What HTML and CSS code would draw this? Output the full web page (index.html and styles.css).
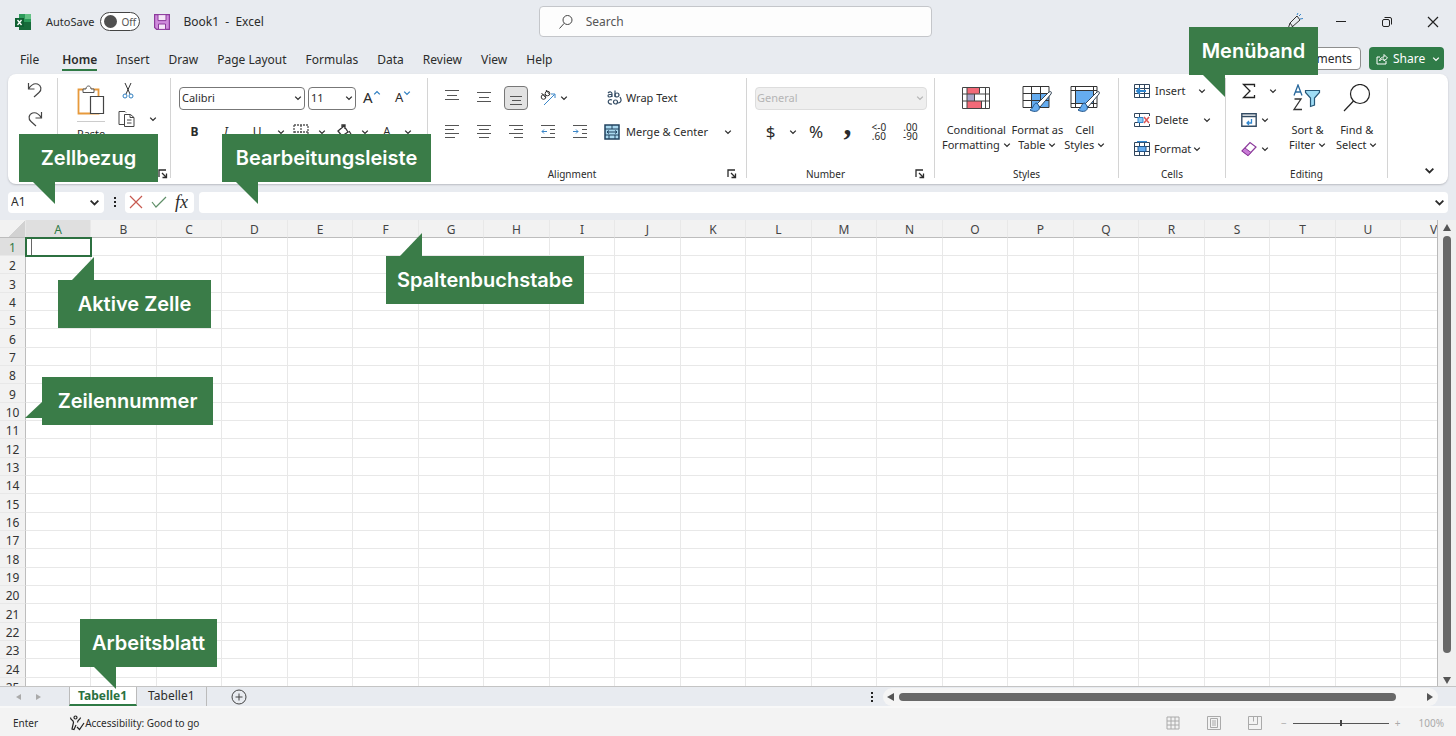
FILE: index.html
```html
<!DOCTYPE html>
<html lang="de">
<head>
    <meta charset="UTF-8">
    <meta name="viewport" content="width=device-width, initial-scale=1.0">
    <title>Book1 - Excel</title>
    <link rel="stylesheet" href="styles.css">
</head>
<body>
    <!-- Shared icons -->
    <svg class="sprite" aria-hidden="true">
        <symbol id="chevron" viewBox="0 0 8 8"><path d="M1.2 2.6 4 5.4 6.8 2.6" fill="none" stroke="currentColor" stroke-width="1.3"/></symbol>
        <symbol id="launcher" viewBox="0 0 10 10"><path d="M1 8V1h7M4 4l4 4M8.5 4.5v4h-4" fill="none" stroke="currentColor" stroke-width="1.3"/></symbol>
        <symbol id="cells" viewBox="0 0 16 16"><path fill="#fff" stroke="#30455c" d="M.5 1.500h15v13H.5zM.5 5.500h15M.5 10.500h15M5.500 1.500v13M10.500 1.500v13"/></symbol>
    </svg>

    <header class="titlebar">
        <div class="title-left">
            <svg class="logo" width="16" height="16" viewBox="0 0 16 16"><path fill="#2d9b5b" d="M4 0h12v16H4z"/><path fill="#176b3a" d="M4 8h12v8H4z"/><path fill="#64c285" d="M10 0h6v5h-6z"/><path fill="#0f6032" d="M0 4h9v9H0z"/><path d="m2.500 6 4 5M6.500 6l-4 5" stroke="#fff" stroke-width="1.300"/></svg>
            <label class="autosave">AutoSave
                <span class="toggle"><input type="checkbox"><span>Off</span></span>
            </label>
            <button class="icon-btn save" aria-label="Save"><svg width="16" height="16" viewBox="0 0 16 16"><path fill="#cf8bdc" stroke="#8c3a9c" stroke-width="1.200" d="M.6.6h14.800v14.800H2.600l-2-2z"/><path fill="#f5e6f8" stroke="#8c3a9c" d="M4 .6h8v6H4zM4.500 10h7v5.400h-7z"/></svg></button>
            <span class="doc-name">Book1&nbsp; -&nbsp; Excel</span>
        </div>
        <label class="search">
            <svg width="16" height="16" viewBox="0 0 16 16"><circle cx="9.500" cy="6" r="4.500" fill="none" stroke="#444"/><path d="M6.200 9.300 1.500 14.500" stroke="#444"/></svg>
            <input type="text" placeholder="Search" aria-label="Search">
        </label>
        <div class="window-buttons">
            <button class="icon-btn" aria-label="Coming soon"><svg width="18" height="18" viewBox="0 0 18 18"><path d="m2 16 2-6 7-7 3 4-8 7-4 2zM4 10l3 4" fill="none" stroke="#333"/><path d="m11 2 1-2M13 3l2-2M14 6l3-.5" stroke="#3a86c8"/></svg></button>
            <button class="icon-btn" aria-label="Minimize"><svg width="12" height="12" viewBox="0 0 12 12"><path d="M1 5.500h10" stroke="#222"/></svg></button>
            <button class="icon-btn" aria-label="Restore"><svg width="12" height="12" viewBox="0 0 12 12"><rect x="1.500" y="3.500" width="7" height="7" rx="1.500" fill="none" stroke="#222"/><path d="M3.500 1.500H9a1.500 1.500 0 0 1 1.500 1.500v5.500" fill="none" stroke="#222"/></svg></button>
            <button class="icon-btn" aria-label="Close"><svg width="12" height="12" viewBox="0 0 12 12"><path d="m1 1 10 10M11 1 1 11" stroke="#222" stroke-width="1.200"/></svg></button>
        </div>
    </header>

    <nav class="tabs">
        <a href="#" class="file">File</a>
        <a href="#" class="active">Home</a>
        <a href="#">Insert</a>
        <a href="#">Draw</a>
        <a href="#">Page Layout</a>
        <a href="#">Formulas</a>
        <a href="#">Data</a>
        <a href="#">Review</a>
        <a href="#">View</a>
        <a href="#">Help</a>
        <button class="comments">Comments</button>
        <button class="share"><svg width="12" height="12" viewBox="0 0 12 12"><path d="M4 4H1v7h9V8M3.500 8C4 5 6 4 8 4V1.500L11.500 5 8 8V6C6 6 4.500 6.500 3.500 8z" fill="none" stroke="#fff"/></svg>Share<svg class="chev"><use href="#chevron"/></svg></button>
    </nav>

    <section class="ribbon">
        <div class="group undo">
            <button class="icon-btn" aria-label="Undo"><svg width="18" height="18" viewBox="0 0 18 18"><path d="M2.500 2v6h6M2.500 8C5 4 8 2 11.500 3c4 1.500 4.500 6 1.500 8.500L8 16" fill="none" stroke="#444" stroke-width="1.200"/></svg></button>
            <button class="icon-btn" aria-label="Redo"><svg width="18" height="18" viewBox="0 0 18 18"><path d="M15.500 2v6h-6M15.500 8C13 4 10 2 6.500 3 2.500 4.500 2 9 5 11.500L10 16" fill="none" stroke="#444" stroke-width="1.200"/></svg></button>
        </div>

        <div class="group clipboard">
            <div class="group-body">
                <button class="big paste"><svg width="28" height="30" viewBox="0 0 28 30"><path d="M1.500 4.500h20v24h-20z" fill="#fff" stroke="#e79a3c" stroke-width="1.800"/><path d="M6 7.500V4h3c0-4 5-4 5 0h3v3.500z" fill="#fff" stroke="#555"/><path d="M13.500 11.500h13v17h-13z" fill="#fff" stroke="#444" stroke-width="1.200"/></svg><span class="paste-text">Paste</span></button>
                <div class="stack">
                    <button class="icon-btn" aria-label="Cut"><svg width="12" height="16" viewBox="0 0 12 16"><path d="m3 0 5 11M9 0 4 11" stroke="#333"/><circle cx="3" cy="13" r="2" fill="none" stroke="#2f7fc1"/><circle cx="9" cy="13" r="2" fill="none" stroke="#2f7fc1"/></svg></button>
                    <button class="icon-btn copy" aria-label="Copy"><svg width="17" height="16" viewBox="0 0 17 16"><path d="M6 13.500H1V.5h6l1 1" fill="none" stroke="#444"/><path d="M6.500 3.500h6l3.500 3v9H6.500zM12 3.500v3h4M9 9h4.500M9 12h4.500" fill="none" stroke="#444"/></svg><svg class="chev"><use href="#chevron"/></svg></button>
                </div>
            </div>
            <div class="group-label"><svg class="launch"><use href="#launcher"/></svg></div>
        </div>

        <div class="group font">
            <div class="group-body rows">
                <div class="row">
                    <span class="select font-name"><select aria-label="Font"><option>Calibri</option></select><svg class="chev"><use href="#chevron"/></svg></span>
                    <span class="select font-size"><select aria-label="Font size"><option>11</option></select><svg class="chev"><use href="#chevron"/></svg></span>
                    <button class="tool grow" aria-label="Increase font size">A<svg class="chev up blue"><use href="#chevron"/></svg></button>
                    <button class="tool shrink" aria-label="Decrease font size">A<svg class="chev blue"><use href="#chevron"/></svg></button>
                </div>
                <div class="row">
                    <button class="tool"><b>B</b></button>
                    <button class="tool"><i>I</i></button>
                    <button class="tool"><u>U</u></button>
                    <button class="arrow" aria-label="Underline styles"><svg class="chev"><use href="#chevron"/></svg></button>
                    <button class="narrow" aria-label="Borders"><svg width="16" height="16" viewBox="0 0 16 16"><path d="M1 1h14v14M1 1v14M8 1v14M1 8h14" fill="none" stroke="#555" stroke-width="1.300" stroke-dasharray="2 1"/><path d="M1 15h14" stroke="#222" stroke-width="1.500"/></svg></button>
                    <button class="arrow" aria-label="More borders"><svg class="chev"><use href="#chevron"/></svg></button>
                    <button class="narrow" aria-label="Fill color"><svg width="16" height="16" viewBox="0 0 16 16"><path d="m2 7 6-5 4 6-6 4zM6 4V1h3v4M13 7l2 3" fill="none" stroke="#333" stroke-width="1.300"/><path d="M1 14.500h14" stroke="#f4d038" stroke-width="3"/></svg></button>
                    <button class="arrow" aria-label="More fill colors"><svg class="chev"><use href="#chevron"/></svg></button>
                    <button class="narrow">A</button>
                    <button class="arrow" aria-label="More font colors"><svg class="chev"><use href="#chevron"/></svg></button>
                </div>
            </div>
        </div>

        <div class="group alignment">
            <div class="group-body rows">
                <div class="row">
                    <button class="tool" aria-label="Top align"><svg width="16" height="16" viewBox="0 0 16 16"><path d="M1 .5h14M3 5.500h10M1 9.500h14" stroke="#555"/></svg></button>
                    <button class="tool" aria-label="Middle align"><svg width="16" height="16" viewBox="0 0 16 16"><path d="M1 2.500h14M3 7.500h10M1 11.500h14" stroke="#555"/></svg></button>
                    <button class="tool" aria-label="Bottom align"><span class="pressed"><svg width="16" height="16" viewBox="0 0 16 16"><path d="M2 6.500h12M4 10.500h9M2 14.500h12" stroke="#555"/></svg></span></button>
                    <button class="tool" aria-label="Orientation"><svg width="18" height="18" viewBox="0 0 18 18"><g fill="none" stroke="#333"><circle cx="4.500" cy="8" r="2.300"/><path d="m2.500 4 4.500 5"/><circle cx="8.500" cy="4.500" r="2.300"/><path d="m7 1 4 5"/></g><path d="M5 16 15.500 5.500M12 5h4v4" fill="none" stroke="#3a86c8"/></svg></button>
                    <button class="arrow orient" aria-label="Orientation options"><svg class="chev"><use href="#chevron"/></svg></button>
                    <button class="text-btn wrap"><svg width="16" height="16" viewBox="0 0 16 16"><g fill="none" stroke="#334b63" stroke-width="1.200"><path d="M2 3c2-2 4-1 4 1v3M6 4.500H3.500c-2 0-2 2.500 0 2.500S6 6 6 5M9 .5V7"/><circle cx="11" cy="5" r="2"/><path d="M6 10c-5-2-5 5 0 4"/><circle cx="9.500" cy="12" r="2"/><path d="M14 7c2 3 1 6-2 6"/></g></svg>Wrap Text</button>
                </div>
                <div class="row">
                    <button class="tool" aria-label="Align left"><svg width="16" height="16" viewBox="0 0 16 16"><path d="M1 1.500h14M1 5.500h9M1 9.500h14M1 13.500h10" stroke="#555"/></svg></button>
                    <button class="tool" aria-label="Center"><svg width="16" height="16" viewBox="0 0 16 16"><path d="M1 1.500h14M3 5.500h10M1 9.500h14M3 13.500h10" stroke="#555"/></svg></button>
                    <button class="tool" aria-label="Align right"><svg width="16" height="16" viewBox="0 0 16 16"><path d="M1 1.500h14M6 5.500h9M1 9.500h14M6 13.500h9" stroke="#555"/></svg></button>
                    <button class="tool" aria-label="Decrease indent"><svg width="16" height="16" viewBox="0 0 16 16"><path d="M1 1.500h14M10 5.500h5M10 9.500h5M1 13.500h14" stroke="#555"/><path d="M7 7.500H2M4 5.500l-2 2 2 2" fill="none" stroke="#3a86c8"/></svg></button>
                    <button class="tool" aria-label="Increase indent"><svg width="16" height="16" viewBox="0 0 16 16"><path d="M1 1.500h14M10 5.500h5M10 9.500h5M1 13.500h14" stroke="#555"/><path d="M1 7.500h5M4 5.500l2 2-2 2" fill="none" stroke="#3a86c8"/></svg></button>
                    <button class="text-btn merge"><svg width="16" height="16" viewBox="0 0 16 16"><path d="M1 1h14v14H1z" fill="#a9d8ef" stroke="#20425f" stroke-width="1.500"/><path d="M1 5h14M1 11h14M8 1v4M5 11v4M11 11v4M3 8h10M5 6.500 3 8l2 1.500M11 6.500 13 8l-2 1.500" fill="none" stroke="#20425f"/></svg>Merge &amp; Center<svg class="chev"><use href="#chevron"/></svg></button>
                </div>
            </div>
            <div class="group-label with-launcher">Alignment<svg class="launch"><use href="#launcher"/></svg></div>
        </div>

        <div class="group number">
            <div class="group-body rows">
                <div class="row">
                    <span class="select number-format"><select aria-label="Number format" disabled><option>General</option></select><svg class="chev"><use href="#chevron"/></svg></span>
                </div>
                <div class="row">
                    <button class="tool symbol">$</button>
                    <button class="arrow" aria-label="Currency"><svg class="chev"><use href="#chevron"/></svg></button>
                    <button class="tool symbol">%</button>
                    <button class="tool comma">,</button>
                    <button class="tool decimals">&lt;-0<br>.60</button>
                    <button class="tool decimals">.00<br>-90</button>
                </div>
            </div>
            <div class="group-label with-launcher">Number<svg class="launch"><use href="#launcher"/></svg></div>
        </div>

        <div class="group styles">
            <div class="group-body">
                <button class="big"><svg width="28" height="26" viewBox="0 0 28 26"><path d="M.5 2.500h27v21H.5z" fill="#fff"/><path d="M5 3h12v6H5zM5 16h14v7H5z" fill="#f26a78"/><path d="M5 9h7v7H5z" fill="#a9a5c9"/><path d="M.5 2.500h27v21H.5zM5 2.500v21M17.500 2.500v6M12.500 9v7M19.500 16v7M23.500 2.500v21M.5 9h27M.5 16h27" fill="none" stroke="#444"/></svg>Conditional<span>Formatting <svg class="chev"><use href="#chevron"/></svg></span></button>
                <button class="big"><svg width="30" height="28" viewBox="0 0 30 28"><path d="M1 2.500h26v21H1z" fill="#fff"/><path d="M10 9h17v14H10z" fill="#65acef"/><path d="M1 2.500h26v21H1zM9.500 2.500v21M18.500 2.500v21M1 9.500h26M1 16.500h26" fill="none" stroke="#333"/><path d="m29 10-11 13-3-3L27 8c2-1 3 0 2 2z" fill="#fff" stroke="#345"/><path d="M15 19c-4 0-3 5-7 7 5 3 11 1 9-4z" fill="#65acef" stroke="#22558a"/></svg>Format as<span>Table <svg class="chev"><use href="#chevron"/></svg></span></button>
                <button class="big"><svg width="30" height="28" viewBox="0 0 30 28"><path d="M1 2.500h26v21H1z" fill="#fff"/><path d="M5 7h18v12H5z" fill="#65acef"/><path d="M1 2.500h26v21H1zM5.500 2.500v21M23.500 2.500v21M1 6.500h26M1 19.500h26" fill="none" stroke="#333"/><path d="m29 10-11 13-3-3L27 8c2-1 3 0 2 2z" fill="#fff" stroke="#345"/><path d="M15 19c-4 0-3 5-7 7 5 3 11 1 9-4z" fill="#65acef" stroke="#22558a"/></svg>Cell<span>Styles <svg class="chev"><use href="#chevron"/></svg></span></button>
            </div>
            <div class="group-label">Styles</div>
        </div>

        <div class="group cells">
            <div class="group-body list">
                <button class="text-btn insert"><svg width="16" height="16"><use href="#cells"/><path d="M3 8h9M6 5 3 8l3 3" fill="none" stroke="#2f86d0" stroke-width="2"/></svg>Insert<svg class="chev"><use href="#chevron"/></svg></button>
                <button class="text-btn delete"><svg width="16" height="16" viewBox="0 0 16 16"><path d="M.5 5V1.500h15V4M.5 11v3.500h15V12M.5 5.500h5M.5 10.500h5M5.500 1.500v4M5.500 10.500v4" fill="none" stroke="#30455c"/><path d="M4 5.500h5v5H4z" fill="#8cc8f2" stroke="#2f86d0"/><path d="m10 5 5 6M15 5l-5 6" stroke="#dc5555" stroke-width="1.500"/></svg>Delete<svg class="chev"><use href="#chevron"/></svg></button>
                <button class="text-btn format"><svg width="16" height="16"><use href="#cells"/><path d="M4 5.500h8v5H4z" fill="#65acef" stroke="#22558a"/><path d="M3 .5h10" stroke="#2f86d0" stroke-width="1.500"/></svg>Format<svg class="chev"><use href="#chevron"/></svg></button>
            </div>
            <div class="group-label">Cells</div>
        </div>

        <div class="group editing">
            <div class="group-body">
                <div class="list">
                    <button class="text-btn sum" aria-label="AutoSum"><svg width="16" height="16" viewBox="0 0 16 16"><path d="M13.500 4V1.500h-11L9 8l-6.500 6.500h11V12" fill="none" stroke="#222" stroke-width="1.300"/></svg><svg class="chev"><use href="#chevron"/></svg></button>
                    <button class="text-btn" aria-label="Fill"><svg width="16" height="16" viewBox="0 0 16 16"><path d="M.8 1.800h14.400v12.400H.8zM.8 4.500h14.400" fill="#fff" stroke="#334b63" stroke-width="1.400"/><path d="M10.500 7v4H6M8 9l-2 2 2 2" fill="none" stroke="#2f86d0" stroke-width="1.300"/></svg><svg class="chev"><use href="#chevron"/></svg></button>
                    <button class="text-btn" aria-label="Clear"><svg width="16" height="16" viewBox="0 0 16 16"><path d="m1 10 8-8.500L15 6l-8 8.500z" fill="#fff" stroke="#8c3a9c" stroke-width="1.200"/><path d="m1 10 3-3 6 4.500-3 3z" fill="#c97bd6" stroke="#8c3a9c"/></svg><svg class="chev"><use href="#chevron"/></svg></button>
                </div>
                <button class="big"><svg width="30" height="28" viewBox="0 0 30 28"><path d="M2 11.500 6 1l4 10.500M3.500 8h5" fill="none" stroke="#28689c" stroke-width="1.300"/><path d="M2.500 15H9L2 25.500h8" fill="none" stroke="#333" stroke-width="1.300"/><path d="M13.500 6.500h14v2L22.500 14v7l-4 1.500V14l-5-5.500z" fill="#9edcf5" stroke="#285878" stroke-width="1.200"/></svg>Sort &amp;<span>Filter <svg class="chev"><use href="#chevron"/></svg></span></button>
                <button class="big"><svg width="30" height="28" viewBox="0 0 30 28"><circle cx="18" cy="10" r="9.500" fill="none" stroke="#222" stroke-width="1.200"/><path d="M11.500 17 2 27" stroke="#222" stroke-width="1.200"/></svg>Find &amp;<span>Select <svg class="chev"><use href="#chevron"/></svg></span></button>
            </div>
            <div class="group-label">Editing</div>
        </div>
        <button class="icon-btn collapse" aria-label="Collapse ribbon"><svg width="11" height="11"><use href="#chevron"/></svg></button>
    </section>

    <div class="formula-bar">
        <label class="name-box"><input type="text" value="A1" aria-label="Name box"><svg width="11" height="11"><use href="#chevron"/></svg></label>
        <span class="dots"></span>
        <div class="fx-box">
            <button class="icon-btn" aria-label="Cancel"><svg width="14" height="14" viewBox="0 0 14 14"><path d="m1 1 12 12M13 1 1 13" stroke="#c75a50" stroke-width="1.200"/></svg></button>
            <button class="icon-btn" aria-label="Enter"><svg width="16" height="14" viewBox="0 0 16 14"><path d="m1 7 4 5L15 2" fill="none" stroke="#5f8f68" stroke-width="1.200"/></svg></button>
            <button class="icon-btn fx">fx</button>
        </div>
        <label class="formula"><input type="text" aria-label="Formula"><svg width="11" height="11"><use href="#chevron"/></svg></label>
    </div>

    <main class="sheet">
        <div class="grid-view">
            <table id="grid"></table>
        </div>
        <div class="v-scroll">
            <svg width="8" height="8"><path d="M4 0 8 7H0z" fill="#555"/></svg>
            <div class="thumb"></div>
            <svg width="8" height="8"><path d="M0 1h8L4 8z" fill="#555"/></svg>
        </div>
    </main>

    <div class="sheet-tabs">
        <button class="icon-btn" aria-label="Previous sheet"><svg width="5" height="8"><path d="M5 1v6L0 4z" fill="#aaa"/></svg></button>
        <button class="icon-btn" aria-label="Next sheet"><svg width="5" height="8"><path d="M0 1v6l5-3z" fill="#aaa"/></svg></button>
        <a href="#" class="sheet-tab active">Tabelle1</a>
        <a href="#" class="sheet-tab">Tabelle1</a>
        <button class="icon-btn add" aria-label="New sheet"><svg width="16" height="16" viewBox="0 0 16 16"><circle cx="8" cy="8" r="7" fill="none" stroke="#444"/><path d="M8 4.500v7M4.500 8h7" stroke="#444"/></svg></button>
        <span class="dots"></span>
        <div class="h-scroll">
            <svg width="8" height="8"><path d="M7 0v8L0 4z" fill="#555"/></svg>
            <div class="thumb"></div>
            <svg width="8" height="8"><path d="M1 0v8l6-4z" fill="#555"/></svg>
        </div>
    </div>

    <footer class="status">
        <span>Enter</span>
        <span class="access"><svg width="16" height="16" viewBox="0 0 16 16"><g fill="none" stroke="#222" stroke-width="1.200"><circle cx="6.500" cy="2.500" r="1.500"/><path d="M1.500 2.500c0 3 3 2 3 5L3 14l2 .5L7 10M11.500 2.500c0 2-3 2-3 5"/><path d="m8 12 2.500 2.500L15 8"/></g></svg>Accessibility: Good to go</span>
        <div class="views">
            <button class="icon-btn" aria-label="Normal view"><svg width="14" height="14" viewBox="0 0 14 14"><path d="M1 1h12v12H1zM5 1v12M9 1v12M1 5h12M1 9h12" fill="none" stroke="#aaa"/></svg></button>
            <button class="icon-btn" aria-label="Page layout view"><svg width="14" height="14" viewBox="0 0 14 14"><path d="M.5.5h13v13H.5zM3.500 2.500h7v9h-7zM5 5h4M5 7h4M5 9h4" fill="none" stroke="#aaa"/></svg></button>
            <button class="icon-btn" aria-label="Page break view"><svg width="14" height="14" viewBox="0 0 14 14"><path d="M.5.5h13v13H.5zM.5 8.500h9v-8M5.500.5v5" fill="none" stroke="#aaa"/></svg></button>
        </div>
        <div class="zoom">
            <span>−</span>
            <input type="range" aria-label="Zoom" value="50">
            <span>+</span>
        </div>
        <span class="percent">100%</span>
    </footer>

    <!-- Callouts -->
    <div class="callout menuband">Menüband</div>
    <div class="callout zellbezug">Zellbezug</div>
    <div class="callout bearbeitungsleiste">Bearbeitungsleiste</div>
    <div class="callout spaltenbuchstabe">Spaltenbuchstabe</div>
    <div class="callout aktive-zelle">Aktive Zelle</div>
    <div class="callout zeilennummer">Zeilennummer</div>
    <div class="callout arbeitsblatt">Arbeitsblatt</div>

    <script src="script.js"></script>
</body>
</html>
```
FILE: styles.css
```css
* {
    box-sizing: border-box;
}
body {
    margin: 0;
    height: 100vh;
    display: flex;
    flex-direction: column;
    overflow: hidden;
    position: relative;
    background: #e8ebf0;
    color: #2b2b2b;
    font-family: "Noto Sans", "Open Sans", sans-serif;
    font-size: 12px;
    line-height: 16px;
}
button, input, select {
    font: inherit;
    color: inherit;
    border: 0;
    padding: 0;
    margin: 0;
    background: none;
    outline: none;
}
a {
    color: inherit;
    text-decoration: none;
}
svg {
    flex: none;
}
.sprite {
    position: absolute;
    width: 0;
    height: 0;
}
.chev {
    width: 8px;
    height: 8px;
}
.icon-btn, .tool, .arrow, .narrow {
    display: flex;
    align-items: center;
    justify-content: center;
}

/* Title bar */
.titlebar {
    display: flex;
    align-items: center;
    height: 43px;
}
.title-left {
    flex: 0 0 37%;
    display: flex;
    align-items: center;
    padding-left: 15px;
}
.autosave {
    display: flex;
    align-items: center;
    gap: 6px;
    margin-left: 15px;
    font-size: 11px;
}
.toggle {
    display: flex;
    align-items: center;
    gap: 4px;
    width: 40px;
    height: 19px;
    padding-left: 3px;
    border: 1px solid #444;
    border-radius: 10px;
    background: #fff;
    font-size: 10px;
    color: #555;
}
.toggle input {
    appearance: none;
    width: 13px;
    height: 13px;
    border-radius: 50%;
    background: #505050;
}
.save {
    margin: 0 13px 0 14px;
}
.search {
    flex: 0 0 27%;
    height: 31px;
    display: flex;
    align-items: center;
    gap: 12px;
    padding-left: 18px;
    border: 1px solid #c4c6ca;
    border-radius: 4px;
    background: #fdfdfd;
}
.search input {
    flex: 1;
}
.search input::placeholder {
    color: #555;
    opacity: 1;
}
.window-buttons {
    flex: 1;
    display: flex;
    justify-content: flex-end;
}
.window-buttons .icon-btn {
    width: 46px;
}

/* Menu tabs */
.tabs {
    display: flex;
    align-items: center;
    gap: 19px;
    height: 31px;
    padding: 0 12px 0 20px;
}
.tabs a {
    padding-top: 3px;
    line-height: 19px;
    border-bottom: 2px solid transparent;
}
.tabs .file {
    margin-right: 4px;
}
.tabs .active {
    font-weight: 600;
    border-color: #2f7a45;
}
.comments {
    height: 23px;
    margin-left: auto;
    padding: 0 8px;
    border: 1px solid #8e8e8e;
    border-radius: 4px;
    background: #fff;
}
.share {
    display: flex;
    align-items: center;
    gap: 5px;
    width: 75px;
    height: 23px;
    margin-left: -11px;
    padding-left: 7px;
    border-radius: 4px;
    background: #307c48;
    color: #fff;
}
.share .chev {
    margin-left: 2px;
}

/* Ribbon */
.ribbon {
    display: flex;
    height: 110px;
    margin: 0 8px;
    padding: 4px 0 6px;
    border-radius: 8px;
    background: #fff;
    box-shadow: 0 1px 2px #b9bcc2;
}
.group {
    flex: none;
    display: flex;
    flex-direction: column;
    border-right: 1px solid #d4d4d4;
}
.group-body {
    flex: 1;
    display: flex;
}
.group-label {
    display: flex;
    align-items: center;
    justify-content: center;
    position: relative;
    height: 16px;
    margin-bottom: -4px;
    font-size: 10px;
}
.with-launcher {
    padding-right: 30px;
}
.launch {
    position: absolute;
    right: 9px;
    bottom: 3px;
    width: 10px;
    height: 10px;
}
.undo {
    width: 50px;
    padding: 3px 0 0 18px;
    gap: 11px;
}
.undo .icon-btn {
    width: 18px;
}
.clipboard {
    width: 113px;
}
.clipboard .launch {
    right: 2px;
}
.font {
    width: 257px;
}
.alignment {
    width: 319px;
}
.number {
    width: 188px;
}
.styles {
    width: 184px;
}
.cells {
    width: 107px;
}
.editing {
    width: 162px;
}
.clipboard .group-body {
    padding: 7px 0 0 19px;
    gap: 13px;
}
.paste-text {
    margin-top: 6px;
    padding-top: 4px;
    border-top: 1px solid #ccc;
}
.stack {
    display: flex;
    flex-direction: column;
    align-items: flex-start;
    gap: 12px;
    margin-top: -2px;
}
.stack .icon-btn {
    min-width: 20px;
}
.copy {
    gap: 14px;
}
.rows {
    flex-direction: column;
    padding: 8px 8px 0;
    gap: 10px;
}
.row {
    display: flex;
    align-items: center;
    height: 24px;
}
.tool {
    width: 32px;
    height: 24px;
}
.arrow, .narrow {
    width: 22px;
    height: 24px;
}
.row .arrow:nth-of-type(4) {
    width: 18px;
}
.number .arrow {
    width: 14px;
}
.select {
    flex: none;
    display: flex;
    align-items: center;
    position: relative;
    height: 23px;
    border: 1px solid #777;
    border-radius: 4px;
}
.select select {
    appearance: none;
    width: 100%;
    height: 21px;
    padding-left: 2px;
    font-size: 11px;
}
.select .chev {
    position: absolute;
    right: 2px;
}
.font-name {
    width: 126px;
    margin-right: 3px;
}
.font-size {
    width: 48px;
}
.number-format {
    width: 172px;
    border-color: #ddd;
    background: #efefef;
    color: #b5b5b5;
}
.number-format select {
    padding-left: 1px;
    opacity: 1;
}
.grow, .shrink {
    align-items: flex-start;
    padding-top: 3px;
    font-size: 15px;
}
.shrink {
    font-size: 13px;
}
.blue {
    color: #2f7fc1;
}
.up {
    transform: rotate(180deg);
}
.pressed {
    display: flex;
    align-items: center;
    justify-content: center;
    flex: none;
    width: 24px;
    height: 24px;
    border: 1px solid #777;
    border-radius: 4px;
    background: #e2e2e2;
}
.arrow.orient {
    width: 8px;
    margin-left: -4px;
}
.text-btn {
    display: flex;
    align-items: center;
    gap: 4px;
    white-space: nowrap;
    font-size: 11px;
}
.wrap {
    margin-left: 38px;
}
.merge {
    margin-left: 8px;
    gap: 6px;
}
.merge .chev {
    margin-left: 10px;
}
.symbol {
    font-size: 17px;
}
.comma {
    font: bold 32px/8px "Liberation Serif", serif;
    padding-bottom: 16px;
}
.decimals {
    font-size: 10px;
    line-height: 9px;
}
.styles .group-body {
    padding: 6px 0 0 7px;
    gap: 1px;
}
.big {
    display: flex;
    flex-direction: column;
    align-items: center;
    align-self: flex-start;
    line-height: 15px;
    font-size: 11px;
    white-space: nowrap;
}
.styles .big > svg, .editing .big > svg {
    height: 28px;
    margin-bottom: 10px;
}
.list {
    display: flex;
    flex-direction: column;
    gap: 13px;
    padding: 5px 0 0 15px;
}
.cells .text-btn {
    gap: 5px;
}
.insert .chev {
    margin-left: 7px;
}
.delete .chev {
    margin-left: 10px;
}
.cells .text-btn.format {
    gap: 4px;
}
.cells .format .chev {
    margin-left: -2px;
}
.sum .chev {
    margin-left: 8px;
}
.editing .big {
    margin: 6px 0 0 10px;
}
.editing .list + .big {
    margin-left: 12px;
}
.collapse {
    margin: auto 13px 2px auto;
}

/* Formula bar */
.formula-bar {
    display: flex;
    align-items: center;
    height: 36px;
    padding: 0 8px;
}
.name-box, .fx-box, .formula {
    display: flex;
    align-items: center;
    height: 21px;
    border-radius: 4px;
    background: #fff;
}
.name-box {
    width: 96px;
    padding: 0 4px 0 3px;
}
.name-box input {
    width: 78px;
}
.dots {
    width: 2px;
    height: 10px;
    border-top: 2px solid #222;
    border-bottom: 2px solid #222;
    background: linear-gradient(transparent 2px, #222 2px, #222 4px, transparent 4px);
}
.formula-bar .dots {
    margin: 0 9px 0 10px;
}
.fx-box {
    width: 69px;
    gap: 8px;
    padding-left: 4px;
}
.fx {
    font: italic 18px/20px "Liberation Serif", serif;
}
.formula {
    flex: 1;
    margin-left: 5px;
    padding-right: 3px;
}
.formula input {
    flex: 1;
}

/* Grid */
.sheet {
    flex: 1;
    min-height: 0;
    display: flex;
    background: #f0f0f0;
}
.grid-view {
    flex: 1;
    min-width: 0;
    overflow: hidden;
    background: #fff;
    border-right: 1px solid #b9b9b9;
}
table {
    width: 1467px;
    table-layout: fixed;
    border-collapse: separate;
    border-spacing: 0;
}
.row-head {
    width: 26px;
}
.col {
    width: 65px;
}
.col:nth-child(odd) {
    width: 66px;
}
th, td {
    height: 18px;
    padding: 2px 0 0;
    border-right: 1px solid #e8e8e8;
    border-bottom: 1px solid #e8e8e8;
    font-weight: 400;
    line-height: 15px;
}
tbody tr:nth-child(3n) th,
tbody tr:nth-child(3n) td {
    height: 19px;
}
thead th {
    background: #f2f2f2;
    border-bottom-color: #bdbdbd;
    color: #444;
}
tbody th {
    background: #f2f2f2;
    border-right-color: #bdbdbd;
    color: #333;
}
thead th:first-child {
    background: linear-gradient(135deg, #f2f2f2 60%, #d2d2d2 60%);
}
thead th.current, tbody th.current {
    background: #dfdfdf;
    color: #2f7a45;
}
td.current {
    position: relative;
    padding: 0;
    outline: 2px solid #2c7040;
    outline-offset: -1px;
}
td.current::before {
    content: "";
    display: block;
    width: 1px;
    height: 16px;
    margin-left: 5px;
    background: #666;
}
.v-scroll {
    width: 18px;
    display: flex;
    flex-direction: column;
    align-items: center;
    padding: 4px 0 2px;
    gap: 4px;
}
.v-scroll .thumb {
    flex: 1;
    width: 8px;
    margin-bottom: 19px;
    border-radius: 4px;
    background: #686868;
}

/* Sheet tabs */
.sheet-tabs {
    display: flex;
    align-items: center;
    height: 22px;
    padding: 0 18px 0 16px;
    border-top: 1px solid #c4c4c4;
    border-bottom: 2px solid #f8f8f8;
}
.sheet-tabs .icon-btn {
    width: 5px;
    margin-right: 15px;
}
.sheet-tab {
    height: 19px;
    padding: 0 11px;
    border-right: 1px solid #bbb;
    line-height: 18px;
}
.sheet-tab.active {
    margin-left: 13px;
    padding: 0 9px 0 8px;
    border-left: 1px solid #bbb;
    border-bottom: 2px solid #2f7a45;
    background: #fff;
    color: #2a7040;
    font-weight: 700;
}
.sheet-tabs .add {
    width: 16px;
    margin-left: 24px;
}
.sheet-tabs .dots {
    margin-left: auto;
    margin-right: 10px;
}
.h-scroll {
    flex: 0 0 39%;
    display: flex;
    align-items: center;
    gap: 4px;
    height: 18px;
    padding: 0 4px;
    border-radius: 9px;
    background: #f5f5f5;
}
.h-scroll .thumb {
    flex: 1;
    height: 8px;
    margin-right: 26px;
    border-radius: 4px;
    background: #686868;
}

/* Status bar */
.status {
    display: flex;
    align-items: center;
    height: 28px;
    padding: 2px 12px 0 13px;
    background: #f3f3f3;
    font-size: 10px;
}
.access {
    display: flex;
    align-items: center;
    margin-left: 31px;
}
.views {
    display: flex;
    gap: 27px;
    margin-left: auto;
}
.zoom {
    display: flex;
    align-items: center;
    gap: 6px;
    margin-left: 19px;
    color: #aaa;
}
.zoom input {
    appearance: none;
    width: 96px;
    height: 8px;
    background: linear-gradient(#555, #555) center / 100% 1px no-repeat;
}
.zoom input::-webkit-slider-thumb {
    appearance: none;
    width: 2px;
    height: 6px;
    background: #444;
}
.percent {
    margin-left: 18px;
    color: #aaa;
}

/* Callouts */
.callout {
    position: absolute;
    height: 48px;
    background: #3a7c48;
    color: #fff;
    text-align: center;
    font: 600 20px/48px Inter, sans-serif;
}
.callout::after {
    content: "";
    position: absolute;
    top: 48px;
    left: 14px;
    width: 22px;
    height: 22px;
    background: #3a7c48;
    clip-path: polygon(0 0, 100% 0, 100% 100%);
}
.menuband {
    top: 27px;
    right: 138px;
    width: 129px;
}
.zellbezug {
    top: 134px;
    left: 19px;
    width: 139px;
}
.bearbeitungsleiste {
    top: 134px;
    left: 222px;
    width: 209px;
}
.spaltenbuchstabe {
    top: 256px;
    left: 386px;
    width: 198px;
}
.aktive-zelle {
    top: 280px;
    left: 58px;
    width: 153px;
}
.spaltenbuchstabe::after, .aktive-zelle::after {
    top: -23px;
    width: 22px;
    height: 23px;
    clip-path: polygon(100% 0, 100% 100%, 0 100%);
}
.zeilennummer {
    top: 377px;
    left: 42px;
    width: 171px;
}
.zeilennummer::after {
    top: 25px;
    left: -17px;
    width: 17px;
    height: 16px;
    clip-path: polygon(100% 0, 100% 100%, 0 100%);
}
.arbeitsblatt {
    bottom: 69px;
    left: 80px;
    width: 137px;
}
```
FILE: script.js
```js
const columns = 'ABCDEFGHIJKLMNOPQRSTUV'.split('');
const rowCount = 25;

let html = '<colgroup><col class="row-head">' + columns.map(() => '<col class="col">').join('') + '</colgroup>';
html += '<thead><tr><th></th>';
columns.forEach((name, i) => {
    html += `<th scope="col"${i === 0 ? ' class="current"' : ''}>${name}</th>`;
});
html += '</tr></thead><tbody>';

for (let row = 1; row <= rowCount; row++) {
    html += `<tr><th scope="row"${row === 1 ? ' class="current"' : ''}>${row}</th>`;
    columns.forEach((name, i) => {
        html += row === 1 && i === 0 ? '<td class="current"></td>' : '<td></td>';
    });
    html += '</tr>';
}

document.getElementById('grid').innerHTML = html + '</tbody>';
```
